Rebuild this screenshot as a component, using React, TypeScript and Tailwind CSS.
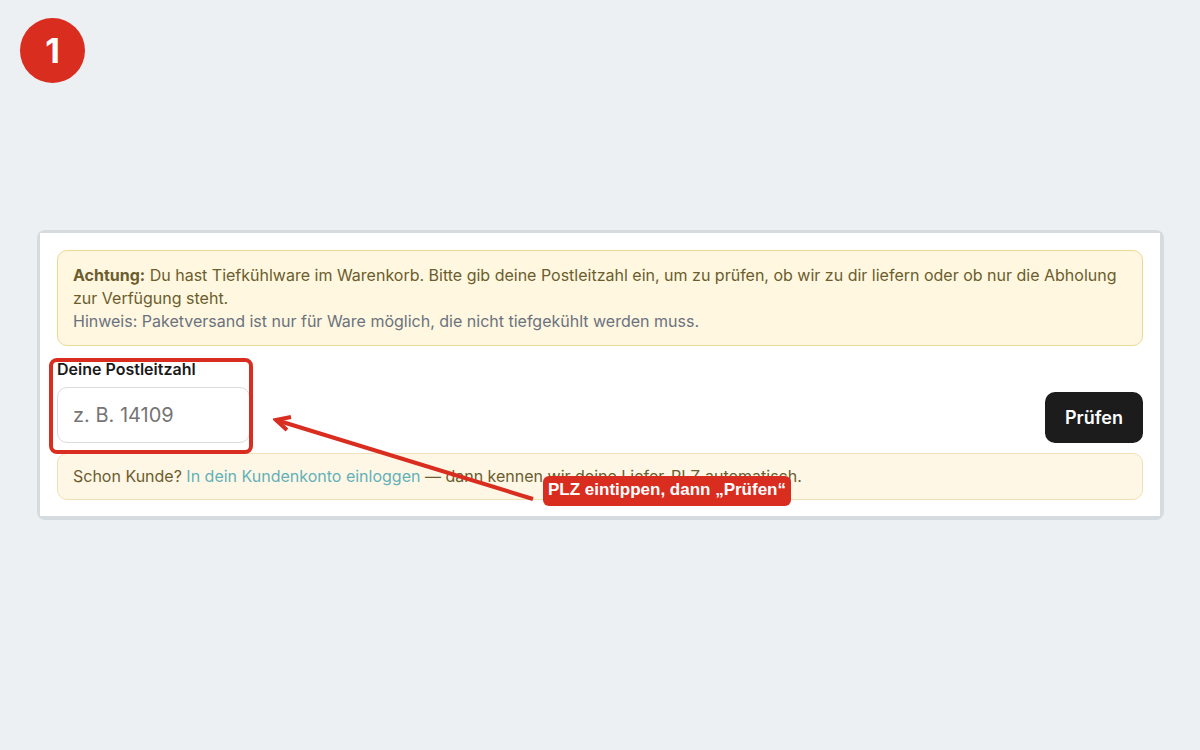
import { useState } from "react";
import type { FormEvent } from "react";

const STEP = 1;
const HINT = "PLZ eintippen, dann „Prüfen“";

function StepBadge({ step }: { step: number }) {
  return (
    <div className="absolute left-5 top-[18px] flex size-[65px] items-center justify-center rounded-full bg-[#d92d20] text-[34px] font-bold leading-none text-white">
      {step}
    </div>
  );
}

function FrozenNotice() {
  return (
    <div className="rounded-[10px] border border-[#ecd993] bg-[#fff7df] px-[15px] pb-3 pt-[13px] leading-[23px] text-[#6b5d2e]">
      <p>
        <strong className="font-bold">Achtung:</strong> Du hast Tiefkühlware im
        Warenkorb. Bitte gib deine Postleitzahl ein, um zu prüfen, ob wir zu dir
        liefern oder ob nur die Abholung zur Verfügung steht.
      </p>
      <p className="text-[#6b7280]">
        Hinweis: Paketversand ist nur für Ware möglich, die nicht tiefgekühlt
        werden muss.
      </p>
    </div>
  );
}

function LoginNotice() {
  return (
    <div className="rounded-[10px] border border-[#f0e0b8] bg-[#fff7e6] px-[15px] py-[11px] leading-[23px] text-[#6b5d2e]">
      Schon Kunde?{" "}
      <a href="#login" className="text-[#62b1b8]">
        In dein Kundenkonto einloggen
      </a>{" "}
      — dann kennen wir deine Liefer-PLZ automatisch.
    </div>
  );
}

// Arrow and label that point at the postcode field
function Callout() {
  return (
    <div className="pointer-events-none absolute left-[233px] top-[180px] flex items-end">
      <svg width="270" height="93" viewBox="0 0 270 93" fill="none" stroke="#d92d20" strokeWidth="4">
        <path d="M260 86L3 7" />
        <path d="M18 4L3 7L14 17" />
      </svg>
      <span className="whitespace-nowrap rounded-md bg-[#d92d20] px-[5px] pb-1 pt-0.5 font-['Liberation_Sans',sans-serif] text-[17px] font-bold leading-6 text-white">
        {HINT}
      </span>
    </div>
  );
}

export default function App() {
  const [plz, setPlz] = useState("");

  function handleSubmit(e: FormEvent) {
    e.preventDefault();
  }

  return (
    <main className="relative flex min-h-screen flex-col justify-center bg-[#ecf0f3] pl-[37px] pr-9 font-['Inter',sans-serif] text-base text-[#1a1a1a]">
      <StepBadge step={STEP} />

      <div className="rounded-lg bg-[#d5dbdf] pb-1 pl-[3px] pr-1 pt-[3px]">
        <section className="relative bg-white px-[17px] pb-4 pt-[17px]">
          <FrozenNotice />

          <form
            onSubmit={handleSubmit}
            className="mb-[10px] mt-3 flex items-end justify-between"
          >
            <div className="relative w-[193px]">
              <label htmlFor="plz" className="block font-semibold leading-[23px]">
                Deine Postleitzahl
              </label>
              <input
                id="plz"
                type="text"
                inputMode="numeric"
                placeholder="z. B. 14109"
                value={plz}
                onChange={(e) => setPlz(e.target.value)}
                className="mt-1.5 block h-14 w-full rounded-[10px] border border-[#d9dbdf] bg-white px-[15px] text-xl placeholder:text-[#757575]"
              />
              <div className="pointer-events-none absolute -bottom-[11px] -left-2 -right-[3px] top-0 rounded-lg border-4 border-[#d92d20]" />
            </div>
            <button
              type="submit"
              className="h-[51px] rounded-[10px] bg-[#1c1c1c] px-5 text-lg font-semibold text-white"
            >
              Prüfen
            </button>
          </form>

          <LoginNotice />
          <Callout />
        </section>
      </div>
    </main>
  );
}
